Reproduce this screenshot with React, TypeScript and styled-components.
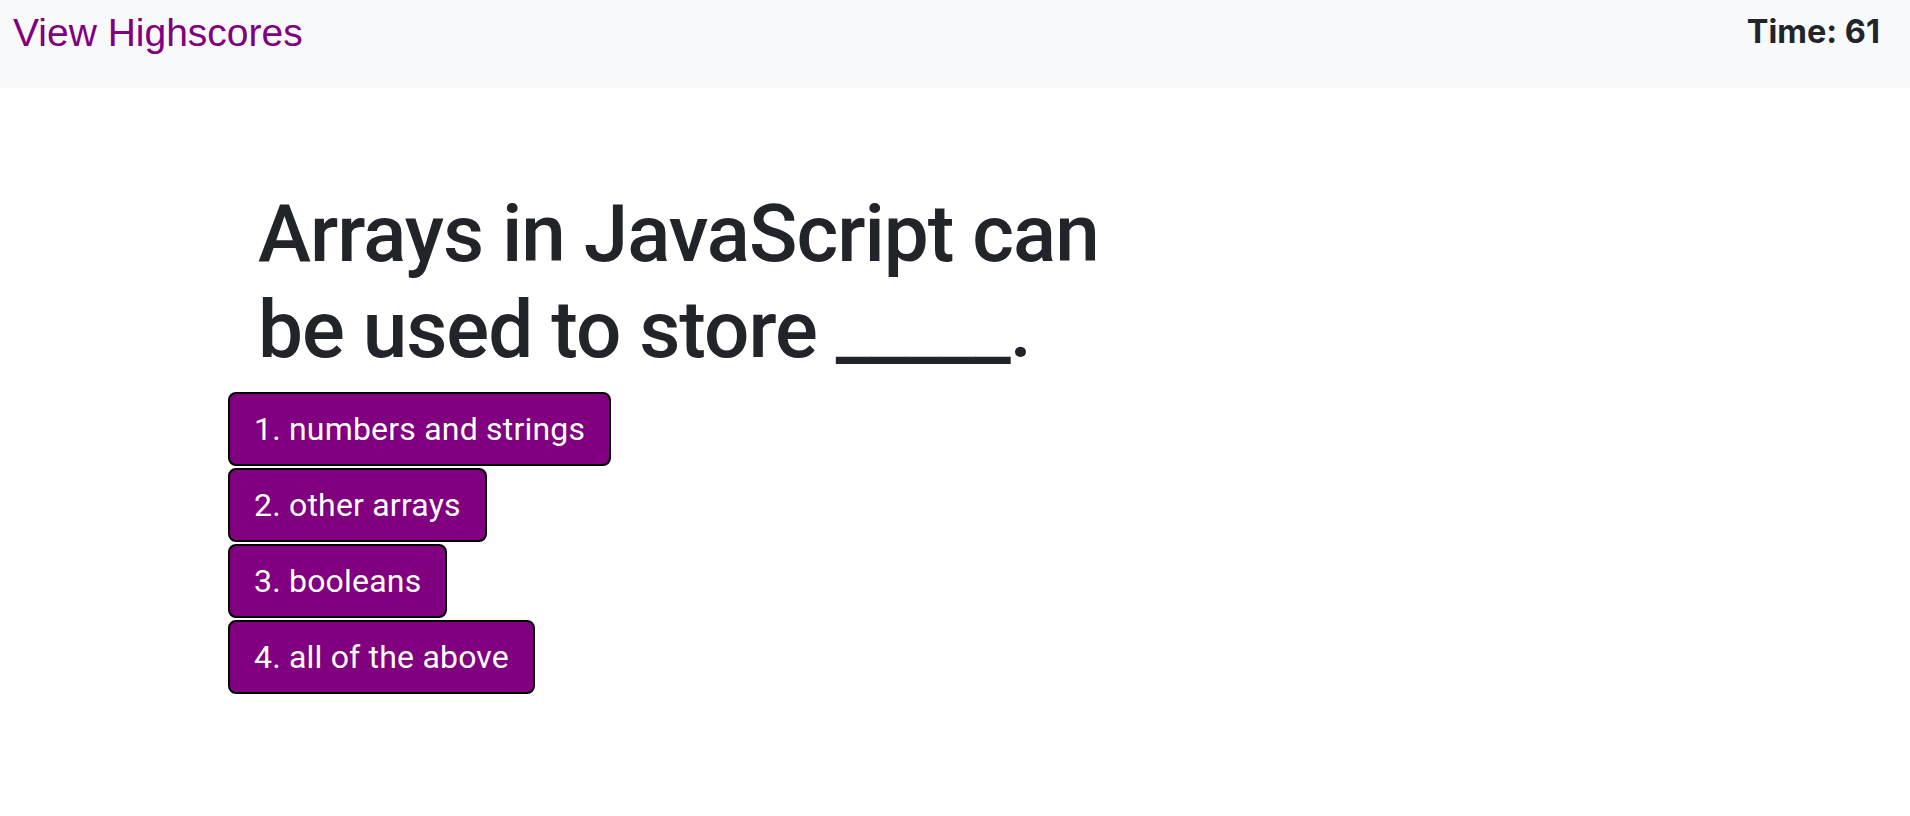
import styled, { createGlobalStyle } from 'styled-components';

const GlobalStyle = createGlobalStyle`
  body {
    margin: 0;
    background: #fff;
    font-family: Roboto, "Noto Sans", sans-serif;
    color: #212529;
  }
`;

const choices = ['1. numbers and strings', '2. other arrays', '3. booleans', '4. all of the above'];

function App() {
  return (
    <>
      <GlobalStyle />
      <NavBar>
        <HighscoreLink href="#">View Highscores</HighscoreLink>
        <Timer>Time: 61</Timer>
      </NavBar>
      <Main>
        <Question>
          Arrays in JavaScript can
          <br />
          be used to store _____.
        </Question>
        {choices.map((c) => (
          <ChoiceButton key={c}>{c}</ChoiceButton>
        ))}
      </Main>
    </>
  );
}

const NavBar = styled.nav`
  display: flex;
  justify-content: space-between;
  align-items: flex-start;
  height: 88px;
  box-sizing: border-box;
  padding: 11px 30px 0 13px;
  background: #f8f9fa;
`;

const HighscoreLink = styled.a`
  font-family: 'Liberation Sans', Arial, sans-serif;
  font-size: 39px;
  line-height: normal;
  color: #800080;
  text-decoration: none;
`;

const Timer = styled.div`
  margin-top: 1px;
  font-family: Inter, Roboto, sans-serif;
  font-size: 32.5px;
  font-weight: 700;
  line-height: normal;
  color: #212529;
`;

const Main = styled.main`
  padding: 98px 0 0 228px;
`;

const Question = styled.h1`
  margin: 0 0 14px 30px;
  font-family: Roboto, "Noto Sans", sans-serif;
  font-size: 80px;
  font-weight: 500;
  line-height: 1.2;
  letter-spacing: -1px;
  color: #212529;
`;

const ChoiceButton = styled.button`
  display: block;
  margin: 0 0 2px;
  padding: 11px 24px;
  border: 2px solid #000;
  border-radius: 8px;
  background: #800080;
  color: #fff;
  font-family: Roboto, "Noto Sans", sans-serif;
  font-size: 32px;
  line-height: 1.5;
  letter-spacing: 0.2px;
  cursor: pointer;
`;

export default App;
